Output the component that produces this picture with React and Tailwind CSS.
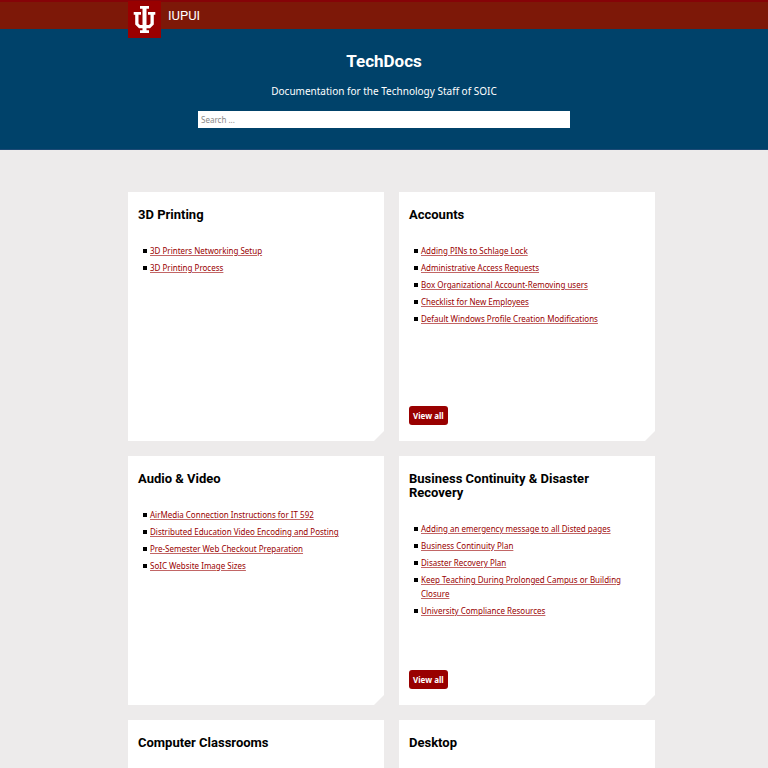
const cards = [
  { title: "3D Printing", links: ["3D Printers Networking Setup", "3D Printing Process"] },
  {
    title: "Accounts",
    links: [
      "Adding PINs to Schlage Lock",
      "Administrative Access Requests",
      "Box Organizational Account-Removing users",
      "Checklist for New Employees",
      "Default Windows Profile Creation Modifications",
    ],
    more: true,
  },
  {
    title: "Audio & Video",
    links: [
      "AirMedia Connection Instructions for IT 592",
      "Distributed Education Video Encoding and Posting",
      "Pre-Semester Web Checkout Preparation",
      "SoIC Website Image Sizes",
    ],
  },
  {
    title: "Business Continuity & Disaster Recovery",
    links: [
      "Adding an emergency message to all Disted pages",
      "Business Continuity Plan",
      "Disaster Recovery Plan",
      "Keep Teaching During Prolonged Campus or Building Closure",
      "University Compliance Resources",
    ],
    more: true,
  },
  { title: "Computer Classrooms", links: [] },
  { title: "Desktop", links: [] },
];

function Trident() {
  return (
    <svg viewBox="0 0 33 38" className="block h-[38px] w-[33px]" aria-hidden="true">
      <rect y="1" width="33" height="37" fill="#990000" />
      <path
        fill="#fff"
        d="M12 6h9v2.700h-2.500v16.300H21l1.500-1.500V14.700H20V12h7.300v2.700H25.800V24.500L22 28.300H18.500V30.300H21V33h-9v-2.700h2.500v-2H11L7.200 24.500V14.700H5.700V12H13v2.700h-2.500v8.800L12 25h2.500V8.700H12z"
      />
    </svg>
  );
}

function Card({ title, links, more }) {
  return (
    <section className="flex min-h-[249px] flex-col bg-white px-[10px] pt-4 pb-4 [clip-path:polygon(0_0,100%_0,100%_calc(100%-10px),calc(100%-10px)_100%,0_100%)]">
      <h2 className="text-[13px] leading-[14px] font-bold text-black">{title}</h2>
      <ul className="mt-[22px] space-y-[3px]">
        {links.map((link) => (
          <li key={link} className="flex pl-[5px] font-['Noto_Sans',sans-serif] text-[8px] leading-[14px]">
            <span className="mt-[5px] mr-[3px] size-1 shrink-0 bg-black" />
            <a href="#" className="text-[#990000] underline decoration-[#990000]/60 underline-offset-1">
              {link}
            </a>
          </li>
        ))}
      </ul>
      {more && (
        <button className="mt-auto h-[19px] self-start rounded-[3px] bg-[#990000] px-1 font-['Noto_Sans',sans-serif] text-[8px] leading-[14px] font-bold text-white">
          View all
        </button>
      )}
    </section>
  );
}

export default function App() {
  return (
    <div className="min-h-screen bg-[#edebeb] font-['Roboto','Liberation_Sans',sans-serif]">
      <header className="h-[29px] border-t-2 border-[#860308] bg-[#7d1808] px-32">
        <a href="#" className="-mt-[2px] flex items-start gap-[7px] text-white">
          <Trident />
          <span className="pt-[9px] text-[13px] leading-[14px]">IUPUI</span>
        </a>
      </header>
      <div className="flex h-[121px] flex-col items-center border-b border-[#1d4a75] bg-[#00426a] px-32 pt-[22px] text-white">
        <h1 className="text-[17px] leading-5 font-bold">TechDocs</h1>
        <p className="mt-[13px] font-['Noto_Sans',sans-serif] text-[10px] leading-[14px]">
          Documentation for the Technology Staff of SOIC
        </p>
        <input
          type="search"
          aria-label="Search"
          placeholder="Search ..."
          className="mt-[13px] h-[17px] w-full max-w-[372px] bg-white px-[3px] font-['Noto_Sans',sans-serif] text-[8px] leading-[14px] text-black outline-none placeholder:text-[#888]"
        />
      </div>
      <main className="px-32 pt-[42px] pb-10">
        <div className="-mr-[15px] grid grid-cols-2 gap-[15px]">
          {cards.map((card) => (
            <Card key={card.title} {...card} />
          ))}
        </div>
      </main>
    </div>
  );
}
